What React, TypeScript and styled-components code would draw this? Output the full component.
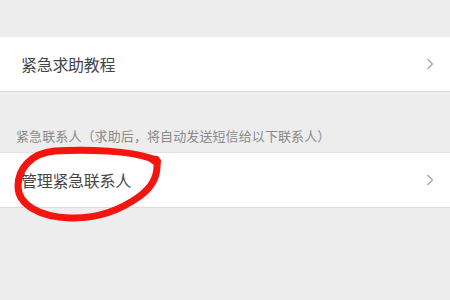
import styled, { createGlobalStyle } from "styled-components";

const GlobalStyle = createGlobalStyle`
  html, body {
    margin: 0;
    padding: 0;
    background: #ededed;
  }
  body {
    font-family: "Noto Sans CJK SC", "Noto Sans", sans-serif;
  }
`;

const Page = styled.div`
  position: relative;
  width: 450px;
  height: 300px;
  overflow: hidden;
  background: #ededed;
  padding-top: 37px;
  box-sizing: border-box;
`;

const Row = styled.div`
  display: flex;
  align-items: center;
  justify-content: space-between;
  height: 54px;
  padding: 0 16px 0 21px;
  background: #ffffff;
  border-bottom: 1px solid #dddddd;
`;

const RowLabel = styled.span`
  font-size: 16px;
  color: #454545;
  letter-spacing: -0.3px;
`;

const SectionHeader = styled.div`
  display: flex;
  align-items: flex-end;
  height: 61px;
  padding: 0 16px 7px;
  box-sizing: border-box;
  font-size: 13px;
  line-height: 18px;
  color: #8a8a8a;
  letter-spacing: 0.1px;
  border-bottom: 1px solid #e2e2e2;
`;

const Overlay = styled.svg`
  position: absolute;
  left: 0;
  top: 0;
  pointer-events: none;
`;

const Chevron = () => (
  <svg width="8" height="12" viewBox="0 0 8 12">
    <path d="M1.5 1 L6.5 6 L1.5 11" fill="none" stroke="#a0a0a0" strokeWidth="1.2" />
  </svg>
);

export default function App() {
  return (
    <>
      <GlobalStyle />
      <Page>
        <Row>
          <RowLabel>紧急求助教程</RowLabel>
          <Chevron />
        </Row>
        <SectionHeader>紧急联系人（求助后，将自动发送短信给以下联系人）</SectionHeader>
        <Row>
          <RowLabel>管理紧急联系人</RowLabel>
          <Chevron />
        </Row>
        <Overlay width="450" height="300" viewBox="0 0 450 300">
          <path
            d="M157 163 L150 158 C130 151 90 149 55 151 C30 153 18 170 18 186 C18 205 40 217 70 218 C100 219 122 209 140 196 C152 187 157 177 157 166"
            fill="none"
            stroke="#f4150f"
            strokeWidth="7"
            strokeLinecap="round"
            strokeLinejoin="round"
          />
          <path d="M148 155 L158 156 L161 160 L160 168 L152 162 Z" fill="#f4150f" />
        </Overlay>
      </Page>
    </>
  );
}
